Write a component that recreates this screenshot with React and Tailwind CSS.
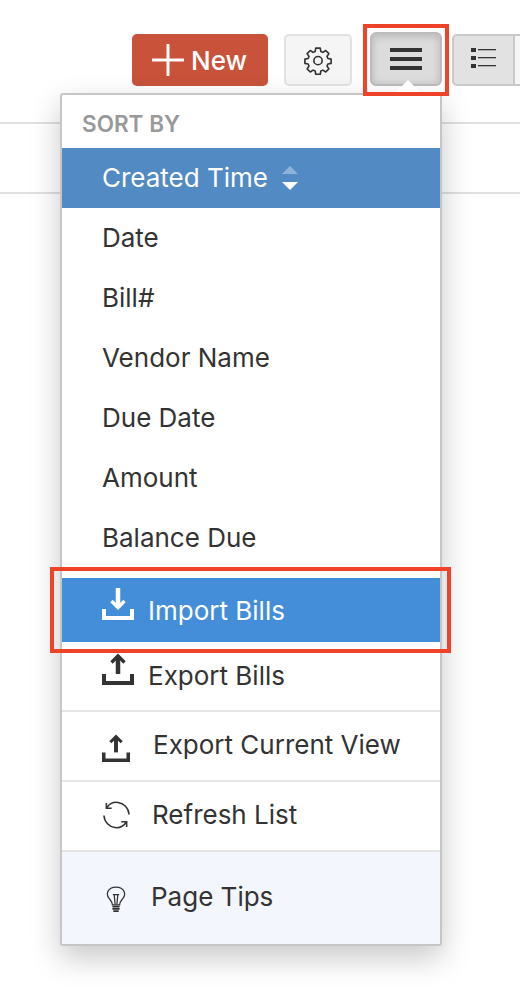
import { useState } from "react";

const FONT = "font-['Inter','Lato',sans-serif]";

const sortOptions = ["Date", "Bill#", "Vendor Name", "Due Date", "Amount", "Balance Due"];

function PlusIcon() {
    return (
        <svg width="32" height="32" viewBox="0 0 32 32" className="text-white">
            <path d="M16 1v30M1 16h30" stroke="currentColor" strokeWidth="3" strokeLinecap="round" fill="none" />
        </svg>
    );
}

function GearIcon() {
    return (
        <svg width="30" height="30" viewBox="0 0 24 24" fill="none" stroke="#333" strokeWidth="1.3" strokeLinejoin="round">
            <path d="M10.2 2.500h3.600l.5 2.700 1.600.7 2.300-1.500 2.500 2.500-1.500 2.300.7 1.600 2.600.5v3.400l-2.600.5-.7 1.600 1.500 2.300-2.500 2.500-2.300-1.500-1.600.7-.5 2.600h-3.600l-.5-2.600-1.600-.7-2.300 1.500-2.500-2.500 1.500-2.300-.7-1.600-2.600-.5v-3.400l2.600-.5.7-1.600-1.500-2.300 2.500-2.500 2.300 1.500 1.600-.7z" />
            <circle cx="12" cy="12.500" r="3.300" />
        </svg>
    );
}

function ListIcon() {
    return (
        <svg width="26" height="22" viewBox="0 0 26 22" fill="#333" className="mb-[2px]">
            <rect x="0" y="0" width="5" height="4" />
            <rect x="0" y="8" width="5" height="4" />
            <rect x="0" y="16" width="5" height="4" />
            <rect x="7" y="1" width="18" height="1.300" />
            <rect x="7" y="9" width="18" height="1.300" />
            <rect x="7" y="17" width="18" height="1.300" />
        </svg>
    );
}

function TrayIcon({ down, width = 32, className = "" }) {
    return (
        <svg width={width} height={width} viewBox="0 0 32 32" fill="none" stroke="currentColor" className={className}>
            <path d="M2 21v9h28v-9" strokeWidth="4" />
            <path d={down ? "M16 0v20" : "M16 3v18"} strokeWidth="4.500" />
            <path d={down ? "M9.500 13l6.500 6.500 6.500-6.500" : "M9.500 9.500L16 3l6.500 6.500"} strokeWidth="3.400" />
        </svg>
    );
}

function RefreshIcon() {
    return (
        <svg width="29" height="30" viewBox="0 0 30 30" fill="none" stroke="#333" strokeWidth="1.600" className="mt-[2px]">
            <path d="M5 7.500C7.500 3.500 12 1.500 16.500 2c6 .7 11 5.500 11.500 12.500" />
            <path d="M4.500 2.500V8h5.500" />
            <path d="M25 22.500c-2.500 4-7 6-11.500 5.500C7.500 27.300 2.500 22.500 2 15.500" />
            <path d="M25.500 27.500V22H20" />
        </svg>
    );
}

function BulbIcon() {
    return (
        <svg width="20" height="27" viewBox="0 0 22 30" fill="none" stroke="#333" strokeWidth="1.400" className="mt-[6px]">
            <path d="M7 21c0-3-1.500-4.500-3.500-7C1 11 .9 8.500 2 6c1.500-3.300 5-4.800 9-4.800s7.500 1.500 9 4.800c1.100 2.500 1 5-1.500 8-2 2.500-3.500 4-3.500 7z" />
            <path d="M7.500 9.500h7M9 9.500l1 11M13 9.500l-1 11" />
            <path d="M7 23h8M7 25.500h8M8 28h6" strokeWidth="2" />
        </svg>
    );
}

function MenuRow({ children, className = "" }) {
    return <div className={`flex items-center pb-[2px] pl-[40px] ${className}`}>{children}</div>;
}

export default function App() {
    const [sortBy] = useState("Created Time");

    return (
        <div className={`relative h-[998px] w-[520px] overflow-hidden bg-white text-[#333] ${FONT}`}>
            {/* toolbar */}
            <div className="flex items-start pl-[132px] pt-[34px]">
                <button className="flex h-[52px] w-[136px] shrink-0 items-center gap-[7px] rounded-[5px] bg-[#c8533a] pl-[20px] text-[26px] font-medium text-white">
                    <PlusIcon />
                    New
                </button>
                <button className="ml-[16px] flex h-[52px] w-[68px] shrink-0 items-center justify-center rounded-[5px] border-2 border-[#e2e2e2] bg-[#f5f5f5]">
                    <GearIcon />
                </button>
                <button className="relative ml-[18px] -mt-[2px] flex h-[54px] w-[72px] shrink-0 flex-col items-center justify-center gap-[5px] rounded-[6px] border-2 border-[#bcbcbc] bg-[#dcdcdc] shadow-[inset_0_2px_8px_rgba(0,0,0,0.18)]">
                    <span className="h-[4px] w-[32px] bg-[#333]"></span>
                    <span className="h-[4px] w-[32px] bg-[#333]"></span>
                    <span className="h-[4px] w-[32px] bg-[#333]"></span>
                </button>
                <div className="ml-[10px] flex h-[52px] w-[63px] shrink-0 items-center justify-center rounded-l-[5px] border-2 border-[#c9c9c9] bg-[#e2e2e2]">
                    <ListIcon />
                </div>
                <div className="h-[52px] w-[20px] shrink-0 border-y-2 border-[#c9c9c9] bg-[#f5f5f5]"></div>
            </div>

            {/* table lines behind the menu */}
            <div className="mt-[36px] h-[2px] bg-[#e0e0e0]"></div>
            <div className="mt-[68px] h-[2px] bg-[#e0e0e0]"></div>

            {/* dropdown */}
            <div className="absolute left-[60px] top-[93px] w-[382px] rounded-[3px] border-2 border-[#c6c6c6] bg-white text-[26px] shadow-[0_12px_30px_rgba(0,0,0,0.22)]">
                <div className="flex h-[53px] items-end pb-[7px] pl-[20px] text-[22.5px] font-semibold text-[#999]">SORT BY</div>
                <MenuRow className="h-[60px] bg-[#528ac3] text-white">
                    {sortBy}
                    <span className="ml-[14px] mt-[2px] flex flex-col gap-[8px]">
                        <span className="h-0 w-0 border-x-[8px] border-b-[8px] border-x-transparent border-b-[#8eb2d8]"></span>
                        <span className="h-0 w-0 border-x-[8px] border-t-[8px] border-x-transparent border-t-white"></span>
                    </span>
                </MenuRow>
                {sortOptions.map((opt) => (
                    <MenuRow key={opt} className="h-[60px]">{opt}</MenuRow>
                ))}
                <div className="mt-[10px] flex h-[64px] items-center gap-[14px] bg-[#448ed9] pl-[40px] text-white">
                    <TrayIcon down className="mb-[12px]" />
                    Import Bills
                </div>
                <div className="flex h-[70px] items-center gap-[14px] border-b-2 border-[#e5e5e5] pb-[2px] pl-[40px]">
                    <TrayIcon className="mb-[12px]" />
                    Export Bills
                </div>
                <div className="flex h-[70px] items-center gap-[23px] border-b-2 border-[#e5e5e5] pb-[4px] pl-[40px]">
                    <TrayIcon width={28} className="mt-[7px]" />
                    Export Current View
                </div>
                <div className="flex h-[70px] items-center gap-[21px] border-b-2 border-[#e5e5e5] pb-[4px] pl-[40px]">
                    <RefreshIcon />
                    Refresh List
                </div>
                <div className="flex h-[92px] items-center gap-[25px] bg-[#f3f6fc] pb-[4px] pl-[44px]">
                    <BulbIcon />
                    Page Tips
                </div>
            </div>

            {/* caret joining the menu to the button */}
            <div className="absolute left-[396px] top-[80px] h-0 w-0 border-x-[12px] border-b-[12px] border-x-transparent border-b-white"></div>

            {/* red annotation boxes */}
            <div className="absolute left-[363px] top-[24px] h-[72px] w-[86px] border-[4px] border-[#ee4328]"></div>
            <div className="absolute left-[50px] top-[567px] h-[86px] w-[401px] border-[4px] border-[#ee4328]"></div>
        </div>
    );
}
